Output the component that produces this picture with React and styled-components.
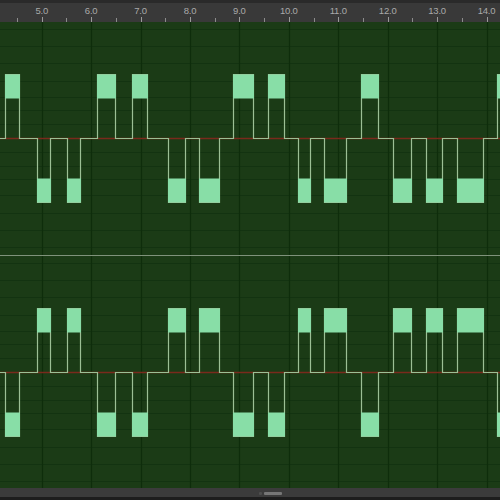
import styled, { createGlobalStyle } from "styled-components";

const UNIT = 49.43;
const ORIGIN = 41.7; // x of the 5.0 mark

const GlobalStyle = createGlobalStyle`
  html, body {
    margin: 0;
    padding: 0;
    background: #1b3b16;
    overflow: hidden;
  }
  body {
    font-family: "Liberation Sans", Arial, sans-serif;
  }
`;

const Editor = styled.div`
  width: 500px;
  height: 500px;
  display: flex;
  flex-direction: column;
  background: #1b3b16;
`;

const Ruler = styled.div`
  height: 22px;
  box-sizing: border-box;
  display: flex;
  padding-left: 17px;
  border-top: 3px solid #2a2a2a;
  background: #393939;
  overflow: hidden;
  flex: 0 0 auto;
`;

const RulerCell = styled.div`
  flex: 0 0 ${UNIT}px;
  position: relative;
  display: flex;
  justify-content: center;

  &::before {
    content: "";
    position: absolute;
    left: 0;
    bottom: 0;
    width: 1px;
    height: 4px;
    background: #8c8c8c;
  }

  &::after {
    content: "";
    position: absolute;
    left: 50%;
    bottom: 0;
    width: 1px;
    height: 5px;
    background: #9a9a9a;
  }
`;

const RulerLabel = styled.span`
  padding-top: 3px;
  font-size: 9.5px;
  line-height: 10px;
  color: #a9a9a9;
  letter-spacing: -0.2px;
`;

const ChannelBox = styled.div`
  height: ${(p) => p.$h}px;
  flex: 0 0 auto;
  background: #1b3b16;

  svg {
    display: block;
  }
`;

const Divider = styled.div`
  height: 1px;
  flex: 0 0 auto;
  background: #7f927b;
`;

const ScrollBar = styled.div`
  flex: 1;
  display: flex;
  justify-content: center;
  align-items: flex-start;
  padding-top: 4px;
  box-sizing: border-box;
  background: #3b3b3b;
  border-bottom: 3px solid #1d1d1d;
`;

const Grip = styled.div`
  display: flex;
  gap: 2px;
  margin-left: 40px;

  span {
    height: 3px;
    background: #767676;
    border-radius: 1px;
  }
  span:first-child {
    width: 3px;
    background: #4e4e4e;
  }
  span:last-child {
    width: 18px;
  }
`;

// pulses for the top channel; dir 1 = up, -1 = down
const pulses = [
  [5, 19, 1],
  [37, 50, -1],
  [67, 80, -1],
  [97, 115, 1],
  [132, 147, 1],
  [168, 185, -1],
  [199, 219, -1],
  [233, 253, 1],
  [268, 284, 1],
  [298, 310, -1],
  [324, 346, -1],
  [361, 378, 1],
  [393, 411, -1],
  [426, 442, -1],
  [457, 483, -1],
  [497, 505, 1],
];

const gridOffsets = [14, 28, 41, 57, 75, 92, 109];

const Channel = ({ height, invert }) => {
  const c = 116.5;
  const xs = Array.from({ length: 10 }, (_, k) => Math.round(ORIGIN + k * UNIT) + 0.5);
  let d = `M0 ${c}`;
  pulses.forEach(([x0, x1, dir]) => {
    const s = invert ? -dir : dir;
    d += ` H${x0 + 0.5} V${c - s * 64} H${x1 + 0.5} V${c}`;
  });
  d += " H500";

  return (
    <ChannelBox $h={height}>
      <svg width="500" height={height} viewBox={`0 0 500 ${height}`}>
        {gridOffsets.flatMap((o) => [c - o, c + o]).map((y) => (
          <line key={y} x1="0" x2="500" y1={y} y2={y} stroke="#133311" strokeWidth="1" />
        ))}
        {xs.map((x) => (
          <line key={x} x1={x} x2={x} y1="0" y2={height} stroke="#0e2d0b" strokeWidth="1.2" />
        ))}
        <line x1="0" x2="500" y1={c} y2={c} stroke="#7a2a1c" strokeWidth="1.4" />
        <path d={d} fill="none" stroke="#9cbf95" strokeWidth="1.2" />
        {pulses.map(([x0, x1, dir]) => {
          const s = invert ? -dir : dir;
          return (
            <rect
              key={x0}
              x={x0}
              y={s > 0 ? c - 64 : c + 40}
              width={x1 - x0 + 1}
              height="24"
              fill="#88dea7"
            />
          );
        })}
      </svg>
    </ChannelBox>
  );
};

const labels = [5, 6, 7, 8, 9, 10, 11, 12, 13, 14];

export default function App() {
  return (
    <>
      <GlobalStyle />
      <Editor>
        <Ruler>
          {labels.map((n) => (
            <RulerCell key={n}>
              <RulerLabel>{n.toFixed(1)}</RulerLabel>
            </RulerCell>
          ))}
        </Ruler>
        <Channel height={233} />
        <Divider />
        <Channel height={232} invert />
        <ScrollBar>
          <Grip>
            <span />
            <span />
          </Grip>
        </ScrollBar>
      </Editor>
    </>
  );
}
